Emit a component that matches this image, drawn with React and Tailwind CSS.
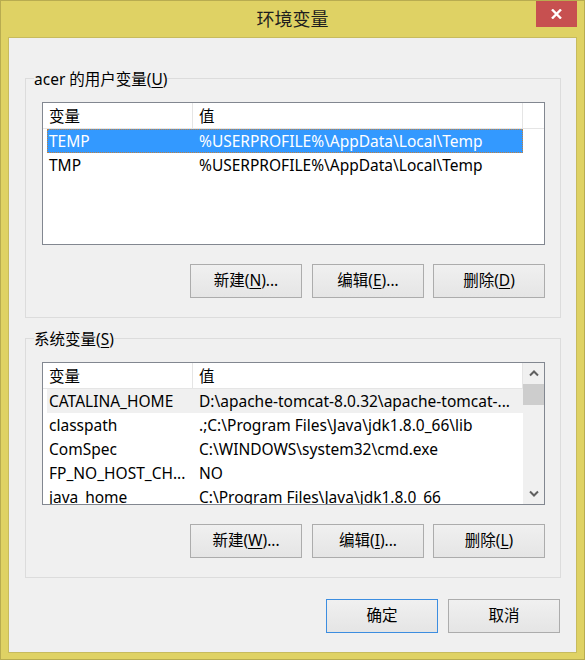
import React from 'react';

const userRows = [
  { name: 'TEMP', value: '%USERPROFILE%\\AppData\\Local\\Temp' },
  { name: 'TMP', value: '%USERPROFILE%\\AppData\\Local\\Temp' },
];

const systemRows = [
  { name: 'CATALINA_HOME', value: 'D:\\apache-tomcat-8.0.32\\apache-tomcat-...' },
  { name: 'classpath', value: '.;C:\\Program Files\\Java\\jdk1.8.0_66\\lib' },
  { name: 'ComSpec', value: 'C:\\WINDOWS\\system32\\cmd.exe' },
  { name: 'FP_NO_HOST_CH...', value: 'NO' },
  { name: 'java_home', value: 'C:\\Program Files\\Java\\jdk1.8.0_66' },
];

function Chevron({ down }) {
  return (
    <svg width="10" height="7" viewBox="0 0 10 7">
      <path
        d={down ? 'M1 1.5 L5 5.5 L9 1.5' : 'M1 5.5 L5 1.5 L9 5.5'}
        fill="none"
        stroke="#606060"
        strokeWidth="2"
      />
    </svg>
  );
}

function Key({ label, k, rest }) {
  return (
    <span>
      {label}(<span className="underline underline-offset-2">{k}</span>){rest}
    </span>
  );
}

function Button({ children, primary }) {
  return (
    <button
      className={
        primary
          ? 'w-[112px] h-[34px] border border-[#3c8de0] bg-gradient-to-b from-[#f0f0f0] to-[#e5e5e5] text-black'
          : 'w-[112px] h-[34px] border border-[#acacac] bg-gradient-to-b from-[#f0f0f0] to-[#e5e5e5] text-black'
      }
    >
      {children}
    </button>
  );
}

function ListBox({ rows, selected, hover, scroll }) {
  return (
    <div className="w-[503px] h-[143px] border border-[#828790] bg-white flex overflow-hidden">
      <div className={scroll ? 'w-[480px] flex flex-col' : 'flex-1 flex flex-col'}>
        <div className="h-[26px] shrink-0 flex border-b border-[#e5e5e5]">
          <div className="w-[150px] pl-[6px] border-r border-[#e5e5e5] leading-[27px]">变量</div>
          <div className="w-[330px] pl-[6px] border-r border-[#e5e5e5] leading-[27px]">值</div>
          <div className="flex-1" />
        </div>
        <div className="pl-[4px]">
          {rows.map((r, i) => {
            let cls = 'w-[476px] h-[24px] flex items-center whitespace-nowrap pt-[1px]';
            if (i === selected) cls += ' bg-[#3399ff] text-white border border-dotted border-[#c08040]';
            else if (i === hover) cls += ' bg-[#f0f0f0] border border-transparent';
            else cls += ' border border-transparent';
            return (
              <div key={r.name} className={cls}>
                <div className="w-[144px] pl-[1px] overflow-hidden">{r.name}</div>
                <div className="flex-1 pl-[7px] overflow-hidden">{r.value}</div>
              </div>
            );
          })}
        </div>
      </div>
      {scroll && (
        <div className="w-[21px] bg-[#f0f0f0] flex flex-col">
          <div className="h-[21px] flex items-center justify-center">
            <Chevron />
          </div>
          <div className="h-[21px] bg-[#cdcdcd]" />
          <div className="flex-1" />
          <div className="h-[21px] flex items-center justify-center">
            <Chevron down />
          </div>
        </div>
      )}
    </div>
  );
}

function Group({ label, children }) {
  return (
    <div className="relative border border-[#dcdcdc] pt-[23px] pl-[16px] pr-[15px] pb-[19px]">
      <span className="absolute top-[-10px] left-[8px] bg-[#f0f0f0] leading-[20px]">{label}</span>
      {children}
    </div>
  );
}

export default function App() {
  return (
    <div className="w-[585px] h-[660px] bg-[#dfd264] border border-[#b8ac50] flex flex-col text-[15.5px] text-black font-['Noto_Sans','Noto_Sans_CJK_SC',sans-serif]">
      <div className="relative h-[36px] shrink-0 flex items-center justify-center">
        <span className="text-[18px] text-[#1e1e1e] mt-[1px]">环境变量</span>
        <div className="absolute right-[7px] top-0 w-[41px] h-[26px] bg-[#c75050] flex items-center justify-center">
          <svg width="11" height="10" viewBox="0 0 11 10">
            <path d="M1 0.5 L10 9.5 M10 0.5 L1 9.5" stroke="#fff" strokeWidth="2.4" />
          </svg>
        </div>
      </div>
      <div className="mx-[7px] h-[616px] border border-[#c7bb5e] bg-[#f0f0f0] pt-[40px] pl-[16px] pr-[15px] pb-[19px] flex flex-col">
        <Group label={<Key label="acer 的用户变量" k="U" />}>
          <ListBox rows={userRows} selected={0} />
          <div className="flex justify-end mt-[19px]">
            <Button><Key label="新建" k="N" rest="..." /></Button>
            <div className="w-[10px]" />
            <Button><Key label="编辑" k="E" rest="..." /></Button>
            <div className="w-[9px]" />
            <Button><Key label="删除" k="D" /></Button>
          </div>
        </Group>
        <div className="h-[20px]" />
        <Group label={<Key label="系统变量" k="S" />}>
          <ListBox rows={systemRows} hover={0} scroll />
          <div className="flex justify-end mt-[19px]">
            <Button><Key label="新建" k="W" rest="..." /></Button>
            <div className="w-[10px]" />
            <Button><Key label="编辑" k="I" rest="..." /></Button>
            <div className="w-[9px]" />
            <Button><Key label="删除" k="L" /></Button>
          </div>
        </Group>
        <div className="flex justify-end mt-[21px] pr-[1px]">
          <Button primary>确定</Button>
          <div className="w-[10px]" />
          <Button>取消</Button>
        </div>
      </div>
    </div>
  );
}
